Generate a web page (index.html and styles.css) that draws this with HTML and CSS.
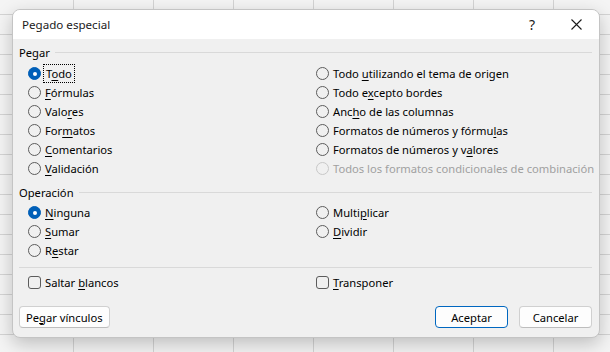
FILE: index.html
```html
<!DOCTYPE html>
<html lang="es">
<head>
  <meta charset="UTF-8">
  <meta name="viewport" content="width=device-width, initial-scale=1.0">
  <title>Pegado especial</title>
  <link rel="stylesheet" href="styles.css">
</head>
<body>
  <div class="dialog">
    <div class="title-bar">
      <span class="title">Pegado especial</span>
      <span class="title-btn help">?</span>
      <span class="title-btn close">
        <svg width="11" height="11" viewBox="0 0 11 11"><path d="M0.5 0.5 L10.5 10.5 M10.5 0.5 L0.5 10.5" stroke="#1a1a1a" stroke-width="1.1" fill="none"/></svg>
      </span>
    </div>

    <div class="content">
      <div class="group-header"><span>Pegar</span><div class="rule"></div></div>
      <div class="options">
        <label class="opt"><span class="radio checked"></span><span class="focus">T<u>o</u>do</span></label>
        <label class="opt"><span class="radio"></span><span>Todo <u>u</u>tilizando el tema de origen</span></label>
        <label class="opt"><span class="radio"></span><span><u>F</u>órmulas</span></label>
        <label class="opt"><span class="radio"></span><span>Todo e<u>x</u>cepto bordes</span></label>
        <label class="opt"><span class="radio"></span><span>Valo<u>r</u>es</span></label>
        <label class="opt"><span class="radio"></span><span>Anc<u>h</u>o de las columnas</span></label>
        <label class="opt"><span class="radio"></span><span>For<u>m</u>atos</span></label>
        <label class="opt"><span class="radio"></span><span>Formatos de números y fórmu<u>l</u>as</span></label>
        <label class="opt"><span class="radio"></span><span><u>C</u>omentarios</span></label>
        <label class="opt"><span class="radio"></span><span>Formatos de números y v<u>a</u>lores</span></label>
        <label class="opt"><span class="radio"></span><span><u>V</u>alidación</span></label>
        <label class="opt disabled"><span class="radio"></span><span>Todos los formatos condicionales de combinación</span></label>
      </div>

      <div class="group-header second"><span>Operación</span><div class="rule"></div></div>
      <div class="options ops">
        <label class="opt"><span class="radio checked"></span><span><u>N</u>inguna</span></label>
        <label class="opt"><span class="radio"></span><span>Multi<u>p</u>licar</span></label>
        <label class="opt"><span class="radio"></span><span><u>S</u>umar</span></label>
        <label class="opt"><span class="radio"></span><span><u>D</u>ividir</span></label>
        <label class="opt"><span class="radio"></span><span>R<u>e</u>star</span></label>
      </div>

      <div class="separator"></div>

      <div class="options checks">
        <label class="opt"><span class="checkbox"></span><span>Saltar <u>b</u>lancos</span></label>
        <label class="opt"><span class="checkbox"></span><span><u>T</u>ransponer</span></label>
      </div>

      <div class="buttons">
        <button type="button">Pe<u>g</u>ar vínculos</button>
        <div class="spacer"></div>
        <button type="button" class="primary">Aceptar</button>
        <button type="button">Cancelar</button>
      </div>
    </div>
  </div>
</body>
</html>
```

FILE: styles.css
```css
html, body {
  margin: 0;
  padding: 0;
}
body {
  width: 610px;
  height: 352px;
  overflow: hidden;
  box-sizing: border-box;
  padding: 9px 0 0 12px;
  font-family: "Noto Sans", "Open Sans", sans-serif;
  font-size: 11.2px;
  color: #000;
  background-color: #f4f4f4;
  background-image:
    linear-gradient(to right, transparent 73px, #d4d4d4 73px, #d4d4d4 74px, transparent 74px),
    linear-gradient(to bottom, transparent 14px, #d4d4d4 14px, #d4d4d4 15px, transparent 15px);
  background-size: 80px 100%, 100% 20px;
}
.dialog {
  width: 588px;
  height: 329px;
  box-sizing: border-box;
  background: #f0f0f0;
  border: 1px solid #c4c4c4;
  border-radius: 8px;
  box-shadow: 0 6px 18px rgba(0, 0, 0, 0.22);
  overflow: hidden;
  display: flex;
  flex-direction: column;
}
.title-bar {
  height: 29px;
  background: #fff;
  display: flex;
  align-items: center;
  padding-left: 9px;
  flex-shrink: 0;
}
.title {
  flex: 1;
  color: #1a1a1a;
  font-size: 11.6px;
}
.title-btn {
  display: flex;
  align-items: center;
  justify-content: center;
  color: #1a1a1a;
}
.help {
  width: 12px;
  margin-right: 33px;
  font-size: 14px;
}
.close {
  width: 11px;
  margin-right: 17px;
}
.content {
  padding: 5px 7px 0 6px;
  display: flex;
  flex-direction: column;
}
.group-header {
  display: flex;
  align-items: center;
  height: 16px;
  gap: 5px;
}
.group-header.second {
  margin-top: 6px;
}
.rule {
  flex: 1;
  height: 1px;
  background: #d9d9d9;
}
.options {
  display: grid;
  grid-template-columns: 288px 1fr;
  padding-left: 9px;
  margin-top: 4px;
}
.options.ops {
  margin-top: 3px;
}
.opt {
  display: flex;
  align-items: center;
  height: 19px;
  gap: 4px;
  white-space: nowrap;
}
.opt u {
  text-decoration-thickness: 1px;
  text-underline-offset: 2px;
}
.opt.disabled {
  color: #a0a0a0;
}
.radio {
  width: 11px;
  height: 11px;
  border: 1px solid #5c5c5c;
  border-radius: 50%;
  flex-shrink: 0;
  position: relative;
}
.radio.checked {
  background: #005fb8;
  border-color: #005fb8;
}
.radio.checked::after {
  content: "";
  position: absolute;
  left: 3.5px;
  top: 3.5px;
  width: 4px;
  height: 4px;
  border-radius: 50%;
  background: #fff;
}
.disabled .radio {
  border-color: #c8c8c8;
}
.checkbox {
  width: 11px;
  height: 11px;
  border: 1px solid #5c5c5c;
  border-radius: 3px;
  flex-shrink: 0;
}
.focus {
  outline: 1px dotted #000;
  outline-offset: 1px;
  padding: 0 1px;
}
.separator {
  height: 1px;
  background: #d9d9d9;
  margin-top: 7px;
}
.checks {
  margin-top: 5px;
}
.buttons {
  display: flex;
  margin-top: 14px;
  gap: 11px;
}
.spacer {
  flex: 1;
}
button {
  height: 22px;
  padding: 0 6px;
  min-width: 73px;
  font-family: inherit;
  font-size: 11.2px;
  color: #000;
  background: #fdfdfd;
  border: 1px solid #d0d0d0;
  border-bottom-color: #bdbdbd;
  border-radius: 4px;
}
button.primary {
  border: 1px solid #0067c0;
}
```
